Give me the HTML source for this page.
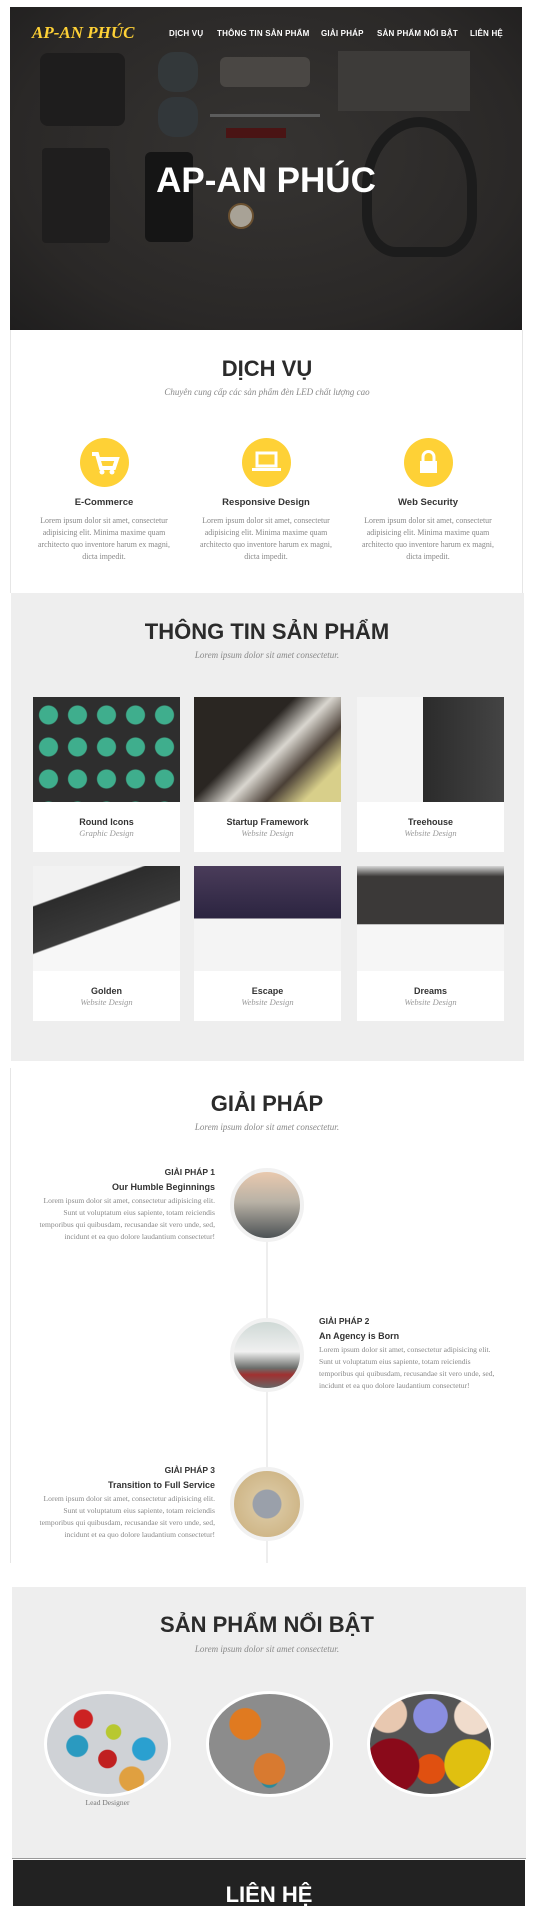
<!DOCTYPE html>
<html><head><meta charset="utf-8"><style>
*{margin:0;padding:0;box-sizing:border-box}
body{width:544px;height:1906px;background:#fff;font-family:"Liberation Sans",sans-serif;position:relative;overflow:hidden;color:#333}
.a{position:absolute}
.h2{font-weight:700;font-size:22px;color:#2b2b2b;left:0;width:534px;text-align:center}
.sub{font-family:"Liberation Serif",serif;font-style:italic;font-size:9px;color:#888;left:0;width:534px;text-align:center}
.nav{font-size:8px;font-weight:700;color:#fff;top:29px;letter-spacing:.2px}
.st{font-weight:700;font-size:9.5px;color:#333;width:160px;text-align:center}
.sp{font-family:"Liberation Serif",serif;font-size:7.9px;line-height:12px;color:#888;width:142px;text-align:center}
.ic{width:49px;height:49px;border-radius:50%;background:#fed136}
.card{background:#fff;width:147px;height:155px}
.card .im{height:105px;width:147px}
.card .t{position:absolute;top:120px;width:100%;text-align:center;font-weight:700;font-size:9px;color:#333}
.card .s{position:absolute;top:131px;width:100%;text-align:center;font-family:"Liberation Serif",serif;font-style:italic;font-size:8.5px;color:#999}
.tl{width:74px;height:74px;border-radius:50%;border:4px solid #f1f1f1}
.th{font-weight:700;font-size:8.5px;color:#333}
.tp{font-family:"Liberation Serif",serif;font-size:7.6px;line-height:12px;color:#888}
.ov{width:127px;height:106px;border-radius:50%;border:3px solid #fff}
</style></head><body>
<div class="a" style="left:10px;top:7px;width:512px;height:323px;background:radial-gradient(ellipse at 50% 45%,#363432,#2a2827 70%,#1f1e1e 100%)">
 <div class="a" style="left:30px;top:46px;width:85px;height:73px;background:#1e1d1d;border-radius:8px"></div>
 <div class="a" style="left:148px;top:45px;width:40px;height:40px;border-radius:40%;background:#33383a"></div>
 <div class="a" style="left:148px;top:90px;width:40px;height:40px;border-radius:40%;background:#32373a"></div>
 <div class="a" style="left:210px;top:50px;width:90px;height:30px;background:#4a4744;border-radius:6px"></div>
 <div class="a" style="left:328px;top:44px;width:132px;height:60px;background:#3d3b39"></div>
 <div class="a" style="left:200px;top:107px;width:110px;height:3px;background:#5c5c5c"></div>
 <div class="a" style="left:216px;top:121px;width:60px;height:10px;background:#4a1414"></div>
 <div class="a" style="left:32px;top:141px;width:68px;height:95px;background:#1f1e1e;border-radius:4px"></div>
 <div class="a" style="left:135px;top:145px;width:48px;height:90px;background:#151515;border-radius:6px"></div>
 <div class="a" style="left:218px;top:196px;width:26px;height:26px;background:#a8a296;border-radius:50%;border:2px solid #6a5030"></div>
 <div class="a" style="left:352px;top:110px;width:115px;height:140px;border:10px solid #1c1c1c;border-radius:50% 50% 30% 30%"></div>
 <div class="a" style="left:22px;top:16px;font-family:'Liberation Serif',serif;font-style:italic;font-weight:700;font-size:17px;color:#fed136">AP-AN PHÚC</div>
 <div class="a" style="left:0;top:154px;width:512px;text-align:center;font-weight:700;font-size:35px;color:#fff">AP-AN PHÚC</div>
</div>
<div class="a nav" style="left:169px">DỊCH VỤ</div>
<div class="a nav" style="left:217px">THÔNG TIN SẢN PHẨM</div>
<div class="a nav" style="left:321px">GIẢI PHÁP</div>
<div class="a nav" style="left:377px">SẢN PHẨM NỔI BẬT</div>
<div class="a nav" style="left:470px">LIÊN HỆ</div>
<div class="a" style="left:10px;top:330px;width:1px;height:263px;background:#e6e6e6"></div>
<div class="a" style="left:522px;top:330px;width:1px;height:263px;background:#e6e6e6"></div>
<div class="a h2" style="top:356px">DỊCH VỤ</div>
<div class="a sub" style="top:387px">Chuyên cung cấp các sản phẩm đèn LED chất lượng cao</div>
<div class="a ic" style="left:80px;top:438px"><svg width="49" height="49" viewBox="0 0 49 49"><path d="M12 16h5l4 14h13l3-9H19" fill="none" stroke="#fff" stroke-width="4"/><circle cx="22" cy="34" r="2.5" fill="#fff"/><circle cx="32" cy="34" r="2.5" fill="#fff"/></svg></div>
<div class="a ic" style="left:242px;top:438px"><svg width="49" height="49" viewBox="0 0 49 49"><rect x="15" y="15" width="19" height="13" fill="none" stroke="#fff" stroke-width="3"/><rect x="10" y="30" width="29" height="3" fill="#fff"/></svg></div>
<div class="a ic" style="left:404px;top:438px"><svg width="49" height="49" viewBox="0 0 49 49"><path d="M19 23v-4a5.5 5.5 0 0 1 11 0v4" fill="none" stroke="#fff" stroke-width="3"/><rect x="16" y="23" width="17" height="12" fill="#fff"/></svg></div>
<div class="a st" style="left:24px;top:497px">E-Commerce</div>
<div class="a st" style="left:186px;top:497px">Responsive Design</div>
<div class="a st" style="left:348px;top:497px">Web Security</div>
<div class="a sp" style="left:33px;top:515px">Lorem ipsum dolor sit amet, consectetur adipisicing elit. Minima maxime quam architecto quo inventore harum ex magni, dicta impedit.</div>
<div class="a sp" style="left:195px;top:515px">Lorem ipsum dolor sit amet, consectetur adipisicing elit. Minima maxime quam architecto quo inventore harum ex magni, dicta impedit.</div>
<div class="a sp" style="left:357px;top:515px">Lorem ipsum dolor sit amet, consectetur adipisicing elit. Minima maxime quam architecto quo inventore harum ex magni, dicta impedit.</div>
<div class="a" style="left:11px;top:593px;width:513px;height:468px;background:#eee"></div>
<div class="a h2" style="top:619px">THÔNG TIN SẢN PHẨM</div>
<div class="a sub" style="top:650px">Lorem ipsum dolor sit amet consectetur.</div>
<div class="a card" style="left:33px;top:697px"><div class="im" style="background:#2e2e2e;background-image:radial-gradient(circle,#3fae8d 9px,transparent 10px);background-size:29px 32px;background-position:1px 2px"></div><div class="t">Round Icons</div><div class="s">Graphic Design</div></div>
<div class="a card" style="left:194px;top:697px"><div class="im" style="background:linear-gradient(135deg,#2a2622 40%,#d9d6cf 55%,#4b4037 70%,#d8cf8a 85%)"></div><div class="t">Startup Framework</div><div class="s">Website Design</div></div>
<div class="a card" style="left:357px;top:697px"><div class="im" style="background:linear-gradient(90deg,#f4f4f4 45%,#2b2b2b 45%,#444 100%)"></div><div class="t">Treehouse</div><div class="s">Website Design</div></div>
<div class="a card" style="left:33px;top:866px"><div class="im" style="background:linear-gradient(160deg,#f2f2f2 25%,#2c2c2c 26%,#3a3a3a 55%,#f7f7f7 56%)"></div><div class="t">Golden</div><div class="s">Website Design</div></div>
<div class="a card" style="left:194px;top:866px"><div class="im" style="background:linear-gradient(180deg,#4a3c5a 0,#2b2440 50%,#f4f4f4 50%)"></div><div class="t">Escape</div><div class="s">Website Design</div></div>
<div class="a card" style="left:357px;top:866px"><div class="im" style="background:linear-gradient(180deg,#d6d6d6 0,#3b3938 10%,#3b3938 55%,#f6f6f6 56%)"></div><div class="t">Dreams</div><div class="s">Website Design</div></div>
<div class="a" style="left:10px;top:1068px;width:1px;height:495px;background:#e6e6e6"></div>
<div class="a h2" style="top:1091px">GIẢI PHÁP</div>
<div class="a sub" style="top:1122px">Lorem ipsum dolor sit amet consectetur.</div>
<div class="a" style="left:266px;top:1205px;width:2px;height:358px;background:#eee"></div>
<div class="a tl" style="left:230px;top:1168px;background:linear-gradient(180deg,#e9c9ae,#b9b2a6 45%,#4c5255)"></div>
<div class="a tl" style="left:230px;top:1318px;background:linear-gradient(180deg,#cfd9d6,#f0f0f0 45%,#6a6d6a 70%,#a03030 80%,#666)"></div>
<div class="a tl" style="left:230px;top:1467px;background:radial-gradient(circle,#9aa0aa 30%,#d8c49c 32%,#c9ad7a)"></div>
<div class="a" style="left:37px;top:1167px;width:178px;text-align:right"><div class="th">GIẢI PHÁP 1</div><div class="th" style="margin-top:5px;font-size:9px">Our Humble Beginnings</div><div class="tp" style="margin-top:3px">Lorem ipsum dolor sit amet, consectetur adipisicing elit. Sunt ut voluptatum eius sapiente, totam reiciendis temporibus qui quibusdam, recusandae sit vero unde, sed, incidunt et ea quo dolore laudantium consectetur!</div></div>
<div class="a" style="left:319px;top:1316px;width:178px"><div class="th">GIẢI PHÁP 2</div><div class="th" style="margin-top:5px;font-size:9px">An Agency is Born</div><div class="tp" style="margin-top:3px">Lorem ipsum dolor sit amet, consectetur adipisicing elit. Sunt ut voluptatum eius sapiente, totam reiciendis temporibus qui quibusdam, recusandae sit vero unde, sed, incidunt et ea quo dolore laudantium consectetur!</div></div>
<div class="a" style="left:37px;top:1465px;width:178px;text-align:right"><div class="th">GIẢI PHÁP 3</div><div class="th" style="margin-top:5px;font-size:9px">Transition to Full Service</div><div class="tp" style="margin-top:3px">Lorem ipsum dolor sit amet, consectetur adipisicing elit. Sunt ut voluptatum eius sapiente, totam reiciendis temporibus qui quibusdam, recusandae sit vero unde, sed, incidunt et ea quo dolore laudantium consectetur!</div></div>
<div class="a" style="left:12px;top:1587px;width:514px;height:272px;background:#eee;border-bottom:1px solid #999"></div>
<div class="a h2" style="top:1612px">SẢN PHẨM NỔI BẬT</div>
<div class="a sub" style="top:1644px">Lorem ipsum dolor sit amet consectetur.</div>
<div class="a ov" style="left:44px;top:1691px;background:radial-gradient(circle at 30% 25%,#c22 8%,transparent 9%),radial-gradient(circle at 55% 38%,#b8c830 8%,transparent 9%),radial-gradient(circle at 25% 52%,#2a9ac0 10%,transparent 11%),radial-gradient(circle at 50% 65%,#c02020 10%,transparent 11%),radial-gradient(circle at 80% 55%,#2aa0d0 10%,transparent 11%),radial-gradient(circle at 70% 85%,#e0a040 10%,transparent 11%),#cfd2d6"></div>
<div class="a ov" style="left:206px;top:1691px;background:radial-gradient(circle at 30% 30%,#e07a20 14%,transparent 15%),radial-gradient(circle at 50% 75%,#d87a30 16%,transparent 17%),radial-gradient(circle at 50% 85%,#2a8a9a 8%,transparent 9%),#8c8c8c"></div>
<div class="a ov" style="left:367px;top:1691px;background:radial-gradient(circle at 50% 22%,#8a8ee0 17%,transparent 18%),radial-gradient(circle at 18% 72%,#8a0a1a 22%,transparent 23%),radial-gradient(circle at 82% 70%,#e0c010 20%,transparent 21%),radial-gradient(circle at 50% 75%,#e05010 15%,transparent 16%),radial-gradient(circle at 15% 20%,#e8c8b0 14%,transparent 15%),radial-gradient(circle at 85% 22%,#f0dccc 14%,transparent 15%),#555"></div>
<div class="a" style="left:44px;top:1798px;width:127px;text-align:center;font-family:'Liberation Serif',serif;font-size:7.5px;color:#777">Lead Designer</div>
<div class="a" style="left:13px;top:1860px;width:512px;height:46px;background:#222"></div>
<div class="a" style="left:13px;top:1882px;width:512px;text-align:center;font-weight:700;font-size:22px;color:#fff">LIÊN HỆ</div>
</body></html>
